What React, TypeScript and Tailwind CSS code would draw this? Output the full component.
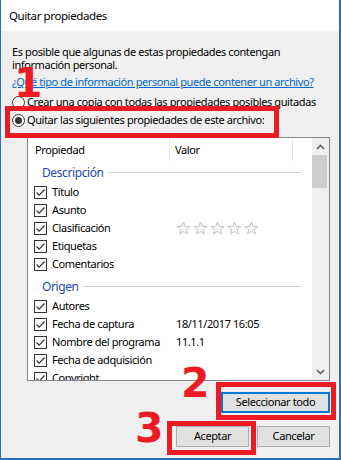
import React from 'react'

const font = "font-['Noto_Sans',sans-serif] tracking-[-0.4px]"

function Check() {
  return (
    <span className="w-[13px] h-[13px] border border-[#333] bg-white flex items-center justify-center shrink-0">
      <svg width="11" height="11" viewBox="0 0 11 11">
        <path d="M1.5 5.5 L4.2 8.2 L9.5 2.5" fill="none" stroke="#333" strokeWidth="1.2" />
      </svg>
    </span>
  )
}

function Stars() {
  const pts = '7,1 8.8,5.4 13.5,5.6 9.8,8.5 11.1,13 7,10.4 2.9,13 4.2,8.5 0.5,5.6 5.2,5.4'
  return (
    <div className="flex gap-[2px]">
      {[0, 1, 2, 3, 4].map(i => (
        <svg key={i} width="15" height="14" viewBox="0 0 14 14">
          <polygon points={pts} fill="#f7f7f7" stroke="#c4c4c4" strokeWidth="1" />
        </svg>
      ))}
    </div>
  )
}

function Row({ label, value }: { label: string, value?: React.ReactNode }) {
  return (
    <div className="h-[18px] flex items-center">
      <div className="w-[142px] pl-[6px] flex items-center gap-[5px] shrink-0">
        <Check />
        <span className="whitespace-nowrap">{label}</span>
      </div>
      <div className="pl-[6px] whitespace-nowrap">{value}</div>
    </div>
  )
}

function Group({ title, first }: { title: string, first?: boolean }) {
  return (
    <div className={`h-[21px] flex items-center pl-[14px] pr-[11px] ${first ? '' : 'mt-[3px]'}`}>
      <span className="text-[#2448a8] text-[12px] whitespace-nowrap">{title}</span>
      <div className="flex-1 h-px bg-[#c5d1e2] ml-[4px]" />
    </div>
  )
}

function Chevron({ down }: { down?: boolean }) {
  return (
    <svg width="9" height="6" viewBox="0 0 9 6">
      <path d={down ? 'M1 1 L4.5 4.5 L8 1' : 'M1 5 L4.5 1.5 L8 5'} fill="none" stroke="#606060" strokeWidth="1.6" />
    </svg>
  )
}

function Radio({ on }: { on?: boolean }) {
  return (
    <span className="w-[13px] h-[13px] rounded-full border border-[#333] bg-white flex items-center justify-center shrink-0">
      {on && <span className="w-[7px] h-[7px] rounded-full bg-[#333]" />}
    </span>
  )
}

function Btn({ children, def, w }: { children: React.ReactNode, def?: boolean, w: string }) {
  return (
    <div className={`${w} h-[21px] flex items-center justify-center bg-[#e1e1e1] ${def ? 'border-2 border-[#0078d7]' : 'border border-[#adadad]'}`}>
      {children}
    </div>
  )
}

const num = "absolute font-['DejaVu_Sans',sans-serif] font-bold text-[41px] leading-none tracking-normal text-[#ed1c24]"
const box = 'absolute border-[5px] border-[#ed1c24]'

export default function App() {
  return (
    <div className={`${font} relative w-[341px] h-[460px] bg-[#f0f0f0] border-l border-r-2 border-b-2 border-[#2a6fb7] text-[11px] text-black overflow-hidden`}>
      {/* barra de título */}
      <div className="h-[31px] bg-white pl-[8px] flex items-center text-[11.5px]">Quitar propiedades</div>

      <div className="pl-[11px] pr-[9px] pt-[14px]">
        <p className="leading-[13px]">
          Es posible que algunas de estas propiedades contengan<br />información personal.
        </p>
        <div className="leading-[13px] mt-[4px] text-[#0066cc] underline whitespace-nowrap">
          ¿Qué tipo de información personal puede contener un archivo?
        </div>
        <div className="mt-[5px] h-[18px] flex items-center gap-[2px] whitespace-nowrap">
          <Radio /> Crear una copia con todas las propiedades posibles quitadas
        </div>
        <div className="h-[18px] flex items-center gap-[2px] whitespace-nowrap">
          <Radio on /> Quitar las siguientes propiedades de este archivo:
        </div>

        {/* lista de propiedades */}
        <div className="mt-[8px] ml-[15px] w-[303px] h-[244px] border border-[#828790] bg-white flex">
          <div className="flex-1 overflow-hidden">
            <div className="h-[24px] flex items-center">
              <div className="w-[142px] h-[22px] flex items-center pl-[7px] border-r border-[#e5e5e5]">Propiedad</div>
              <div className="w-[123px] h-[22px] flex items-center pl-[5px] border-r border-[#e5e5e5]">Valor</div>
            </div>
            <Group title="Descripción" first />
            <Row label="Título" />
            <Row label="Asunto" />
            <Row label="Clasificación" value={<Stars />} />
            <Row label="Etiquetas" />
            <Row label="Comentarios" />
            <Group title="Origen" />
            <Row label="Autores" />
            <Row label="Fecha de captura" value="18/11/2017 16:05" />
            <Row label="Nombre del programa" value="11.1.1" />
            <Row label="Fecha de adquisición" />
            <Row label="Copyright" />
          </div>
          <div className="w-[17px] bg-[#f0f0f0] flex flex-col">
            <div className="h-[17px] flex items-center justify-center"><Chevron /></div>
            <div className="h-[33px] mr-[2px] bg-[#cdcdcd]" />
            <div className="flex-1" />
            <div className="h-[17px] flex items-center justify-center"><Chevron down /></div>
          </div>
        </div>

        <div className="mt-[11px] flex justify-end">
          <Btn def w="w-[109px]">Seleccionar todo</Btn>
        </div>
        <div className="mt-[13px] flex justify-end gap-[8px]">
          <Btn w="w-[73px]">Aceptar</Btn>
          <Btn w="w-[73px]">Cancelar</Btn>
        </div>
      </div>

      {/* anotaciones */}
      <span className={`${num} left-[13px] top-[63px]`}>1</span>
      <span className={`${num} left-[180px] top-[363px]`}>2</span>
      <span className={`${num} left-[134px] top-[408px]`}>3</span>
      <div className={`${box} left-[4px] top-[106px] w-[274px] h-[32px]`} />
      <div className={`${box} left-[215px] top-[382px] w-[120px] h-[38px]`} />
      <div className={`${box} left-[166px] top-[421px] w-[89px] h-[34px]`} />
    </div>
  )
}
